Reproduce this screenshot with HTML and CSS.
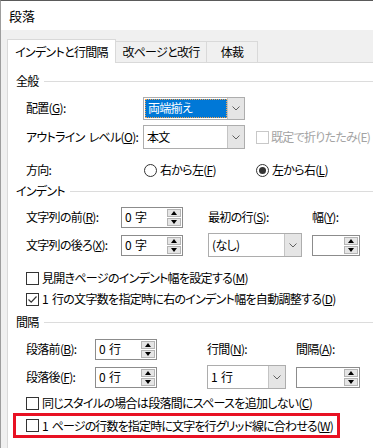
FILE: index.html
```html
<!DOCTYPE html>
<html lang="ja">
<head>
<meta charset="utf-8">
<link rel="stylesheet" href="styles.css">
</head>
<body>
<div class="window">
  <div class="titlebar">段落</div>
  <div class="tabstrip">
    <div class="tab tab-indent active">インデントと行間隔</div>
    <div class="tab tab-break">改ページと改行</div>
    <div class="tab tab-layout">体裁</div>
  </div>
  <div class="panel">
    <div class="group-head head-general"><span>全般</span></div>

    <div class="row row-align">
      <span class="lbl lbl-general">配置(<u>G</u>):</span>
      <div class="combo combo-general focused">
        <div class="combo-val"><span class="sel">両端揃え</span></div>
        <div class="combo-btn"><svg width="8" height="5" viewBox="0 0 8 5"><polyline points="0.5,0.5 4,4 7.5,0.5" fill="none" stroke="#606060" stroke-width="1"/></svg></div>
      </div>
    </div>

    <div class="row row-outline">
      <span class="lbl lbl-general">アウトライン レベル(<u>O</u>):</span>
      <div class="combo combo-general combo-outline">
        <div class="combo-val">本文</div>
        <div class="combo-btn"><svg width="8" height="5" viewBox="0 0 8 5"><polyline points="0.5,0.5 4,4 7.5,0.5" fill="none" stroke="#606060" stroke-width="1"/></svg></div>
      </div>
      <div class="check check-collapse disabled"><span class="cb"></span><span>既定で折りたたみ(E)</span></div>
    </div>

    <div class="row row-dir">
      <span class="lbl lbl-general">方向:</span>
      <div class="radio-item radio-rtl"><span class="radio"></span><span>右から左(<u>F</u>)</span></div>
      <div class="radio-item radio-ltr"><span class="radio on"></span><span>左から右(<u>L</u>)</span></div>
    </div>

    <div class="group-head head-indent"><span>インデント</span></div>

    <div class="grid grid-indent">
      <span class="lbl">文字列の前(<u>R</u>):</span>
      <div class="spin spin-62"><span class="spin-val">0 字</span><div class="spin-btns"><span class="up"></span><span class="dn"></span></div></div>
      <span class="lbl">最初の行(<u>S</u>):</span>
      <span class="lbl">幅(<u>Y</u>):</span>

      <span class="lbl">文字列の後ろ(<u>X</u>):</span>
      <div class="spin spin-62"><span class="spin-val">0 字</span><div class="spin-btns"><span class="up"></span><span class="dn"></span></div></div>
      <div class="combo combo-first">
        <div class="combo-val">(なし)</div>
        <div class="combo-btn"><svg width="8" height="5" viewBox="0 0 8 5"><polyline points="0.5,0.5 4,4 7.5,0.5" fill="none" stroke="#606060" stroke-width="1"/></svg></div>
      </div>
      <div class="spin spin-48"><span class="spin-val"></span><div class="spin-btns"><span class="up"></span><span class="dn"></span></div></div>
    </div>

    <div class="check check-row check-mirror"><span class="cb"></span><span>見開きページのインデント幅を設定する(<u>M</u>)</span></div>
    <div class="check check-row check-auto"><span class="cb checked"><svg width="11" height="11" viewBox="0 0 11 11"><polyline points="1.5,5.5 4.2,8.2 9.5,2.5" fill="none" stroke="#333" stroke-width="1.2"/></svg></span><span>1 行の文字数を指定時に右のインデント幅を自動調整する(<u>D</u>)</span></div>

    <div class="group-head head-spacing"><span>間隔</span></div>

    <div class="grid grid-spacing">
      <span class="lbl">段落前(<u>B</u>):</span>
      <div class="spin spin-62"><span class="spin-val">0 行</span><div class="spin-btns"><span class="up"></span><span class="dn"></span></div></div>
      <span class="lbl">行間(<u>N</u>):</span>
      <span class="lbl">間隔(<u>A</u>):</span>

      <span class="lbl">段落後(<u>F</u>):</span>
      <div class="spin spin-62"><span class="spin-val">0 行</span><div class="spin-btns"><span class="up"></span><span class="dn"></span></div></div>
      <div class="combo combo-line">
        <div class="combo-val">1 行</div>
        <div class="combo-btn"><svg width="8" height="5" viewBox="0 0 8 5"><polyline points="0.5,0.5 4,4 7.5,0.5" fill="none" stroke="#606060" stroke-width="1"/></svg></div>
      </div>
      <div class="spin spin-64"><span class="spin-val"></span><div class="spin-btns"><span class="up"></span><span class="dn"></span></div></div>
    </div>

    <div class="check check-row check-same"><span class="cb"></span><span>同じスタイルの場合は段落間にスペースを追加しない(<u>C</u>)</span></div>

    <div class="highlight">
      <div class="check check-grid"><span class="cb"></span><span>1 ページの行数を指定時に文字を行グリッド線に合わせる(<u>W</u>)</span></div>
    </div>
  </div>
</div>
</body>
</html>
```

FILE: styles.css
```css
* { box-sizing: border-box; }
html, body { margin: 0; padding: 0; }
body {
  width: 373px;
  height: 448px;
  overflow: hidden;
  background: #f0f0f0;
  font-family: "Noto Sans CJK JP", "Noto Sans", sans-serif;
  font-size: 12px;
  letter-spacing: -0.7px;
  word-spacing: 2px;
  line-height: 16px;
  color: #000;
  font-feature-settings: "palt";
}
u { text-decoration: underline; text-underline-offset: 1px; }

.window {
  height: 448px;
  border-top: 1px solid #5a5a5a;
  border-left: 1px solid #9d9d9d;
  display: flex;
  flex-direction: column;
}
.titlebar {
  height: 29px;
  background: #fff;
  padding-left: 8px;
  display: flex;
  align-items: center;
  font-size: 13px;
  letter-spacing: 0;
}
.tabstrip {
  height: 32px;
  flex: none;
  background: #f0f0f0;
  padding-left: 6px;
  display: flex;
  align-items: flex-end;
}
.tab {
  height: 21px;
  border: 1px solid #d9d9d9;
  border-bottom: none;
  background: #f0f0f0;
  margin-left: -1px;
  display: flex;
  align-items: center;
  justify-content: center;
}
.tab-indent { width: 109px; margin-left: 0; }
.tab-break { width: 92px; }
.tab-layout { width: 52px; }
.tab.active {
  height: 24px;
  margin-bottom: -1px;
  background: #fff;
  z-index: 1;
}

.panel {
  flex: 1;
  background: #fff;
  margin-left: 6px;
  border-top: 1px solid #d9d9d9;
  border-left: 1px solid #d9d9d9;
}

.group-head {
  height: 18px;
  padding-left: 8px;
  display: flex;
  align-items: center;
  gap: 5px;
}
.group-head::after {
  content: "";
  flex: 1;
  height: 1px;
  background: #dcdcdc;
}
.head-general { margin-top: 9px; }
.head-indent { margin-top: 2px; }
.head-spacing { margin-top: 5px; }

.row {
  padding-left: 18px;
  display: flex;
  align-items: center;
}
.row-align { margin-top: 6px; height: 24px; }
.row-outline { margin-top: 5px; height: 24px; }
.row-dir { margin-top: 11px; height: 20px; }

.lbl { white-space: nowrap; }
.lbl-general { width: 117px; flex: none; }

.combo {
  display: flex;
  border: 1px solid #adadad;
  background: #fff;
}
.combo-val {
  flex: 1;
  display: flex;
  align-items: center;
  padding-left: 3px;
  white-space: nowrap;
}
.combo-btn {
  width: 17px;
  flex: none;
  background: #e5e5e5;
  border-left: 1px solid #c4c4c4;
  display: flex;
  align-items: center;
  justify-content: center;
}
.combo-general { width: 102px; height: 23px; }
.combo-outline { height: 24px; }
.combo-first { width: 94px; height: 24px; }
.combo-line { width: 79px; height: 24px; }
.focused .combo-val { padding: 1px 0 1px 1px; }
.sel {
  flex: 1;
  align-self: stretch;
  display: flex;
  align-items: center;
  background: #0078d7;
  color: #fff;
  border: 1px dotted #f7a24a;
  padding-left: 2px;
}

.check {
  display: flex;
  align-items: center;
  gap: 3px;
  white-space: nowrap;
}
.cb {
  width: 13px;
  height: 13px;
  flex: none;
  border: 1px solid #333;
  background: #fff;
  display: flex;
  align-items: center;
  justify-content: center;
}
.check.disabled { color: #a3a3a3; }
.check.disabled .cb { border-color: #c8c8c8; }
.check-collapse { margin-left: 11px; gap: 2px; }
.check-row { padding-left: 18px; height: 18px; }
.check-mirror { margin-top: 12px; }
.check-auto { margin-top: 3px; }
.check-same { margin-top: 5px; }
.check-grid { letter-spacing: -0.85px; }

.radio-item {
  display: flex;
  align-items: center;
  gap: 3px;
  white-space: nowrap;
}
.radio-rtl { width: 112px; flex: none; padding-left: 1px; }
.radio-ltr { padding-left: 1px; }
.radio {
  width: 13px;
  height: 13px;
  flex: none;
  border: 1px solid #333;
  border-radius: 50%;
  display: flex;
  align-items: center;
  justify-content: center;
}
.radio.on::after {
  content: "";
  width: 7px;
  height: 7px;
  border-radius: 50%;
  background: #333;
}

.grid {
  display: grid;
  padding-left: 18px;
  grid-template-rows: 22px 24px;
  row-gap: 5px;
  align-items: center;
}
.grid-indent {
  margin-top: 6px;
  grid-template-columns: 95px 87px 104px 48px;
}
.grid-spacing {
  margin-top: 7px;
  grid-template-columns: 69px 112px 89px 64px;
}

.spin {
  height: 21px;
  display: flex;
  align-items: center;
  border: 1px solid #8c8c8c;
  background: #fff;
  padding-right: 1px;
}
.spin-62 { width: 62px; }
.spin-48 { width: 48px; }
.spin-64 { width: 64px; }
.spin-val { flex: 1; padding-left: 3px; white-space: nowrap; }
.spin-btns {
  width: 14px;
  height: 17px;
  flex: none;
  display: flex;
  flex-direction: column;
  gap: 1px;
}
.spin-btns span {
  flex: 1;
  background: #e5e5e5;
  border: 1px solid #b4b4b4;
  display: flex;
  align-items: center;
  justify-content: center;
}
.spin-btns .up::before {
  content: "";
  border-left: 3.5px solid transparent;
  border-right: 3.5px solid transparent;
  border-bottom: 4px solid #000;
}
.spin-btns .dn::before {
  content: "";
  border-left: 3.5px solid transparent;
  border-right: 3.5px solid transparent;
  border-top: 4px solid #000;
}

.highlight {
  margin-top: 1px;
  margin-left: 5px;
  width: 327px;
  height: 25px;
  border: 3px solid #e81123;
  padding-left: 10px;
  display: flex;
  align-items: center;
}
```
